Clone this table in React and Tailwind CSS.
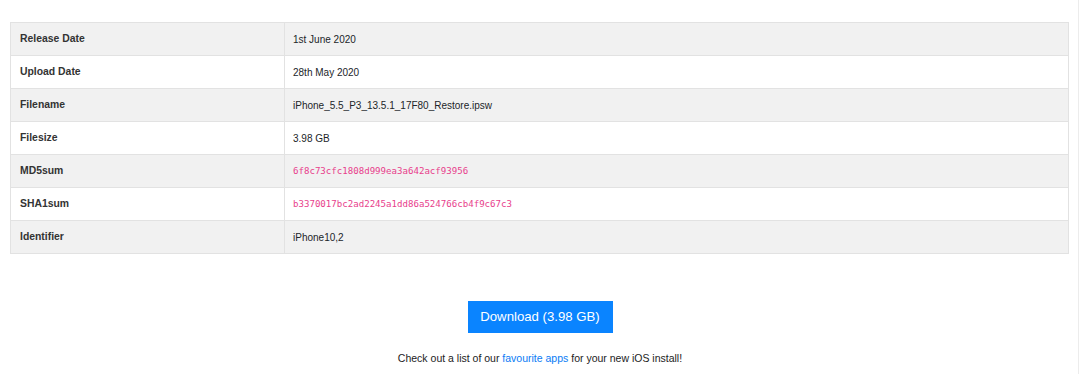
export default function App() {
  const rows = [
    { label: "Release Date", value: "1st June 2020" },
    { label: "Upload Date", value: "28th May 2020" },
    { label: "Filename", value: "iPhone_5.5_P3_13.5.1_17F80_Restore.ipsw" },
    { label: "Filesize", value: "3.98 GB" },
    { label: "MD5sum", value: "6f8c73cfc1808d999ea3a642acf93956", code: true },
    { label: "SHA1sum", value: "b3370017bc2ad2245a1dd86a524766cb4f9c67c3", code: true },
    { label: "Identifier", value: "iPhone10,2" },
  ];

  return (
    <div className="relative w-[1080px] h-[374px] bg-white overflow-hidden font-['Liberation_Sans',Arial,sans-serif] text-[#212529]">
      <div className="absolute top-0 right-[1px] h-full w-px bg-[#ececec]" />
      <div className="pt-[22px] pl-[10px]">
        <table className="w-[1059px] border-collapse border border-[#e2e2e2]">
          <tbody>
            {rows.map((row, i) => (
              <tr key={row.label} className={i % 2 === 0 ? "bg-[#f1f1f1]" : "bg-white"}>
                <td className="w-[274px] h-[33px] px-[9px] border border-[#e2e2e2] text-[10.4px] font-bold text-[#333]">
                  {row.label}
                </td>
                <td className="h-[33px] px-[8px] border border-[#e2e2e2] text-[10px]">
                  {row.code ? (
                    <code className="font-['DejaVu_Sans_Mono',monospace] text-[9.1px] text-[#e83e8c]">
                      {row.value}
                    </code>
                  ) : (
                    row.value
                  )}
                </td>
              </tr>
            ))}
          </tbody>
        </table>
      </div>

      <div className="flex flex-col items-center pt-[47px]">
        <button className="w-[145px] h-[32px] bg-[#0a84ff] text-white text-[13.2px]">
          Download (3.98 GB)
        </button>
        <p className="mt-[18px] text-[10.5px] text-[#222]">
          Check out a list of our{" "}
          <a href="#" className="text-[#0a7bf5]">
            favourite apps
          </a>{" "}
          for your new iOS install!
        </p>
      </div>
    </div>
  );
}
